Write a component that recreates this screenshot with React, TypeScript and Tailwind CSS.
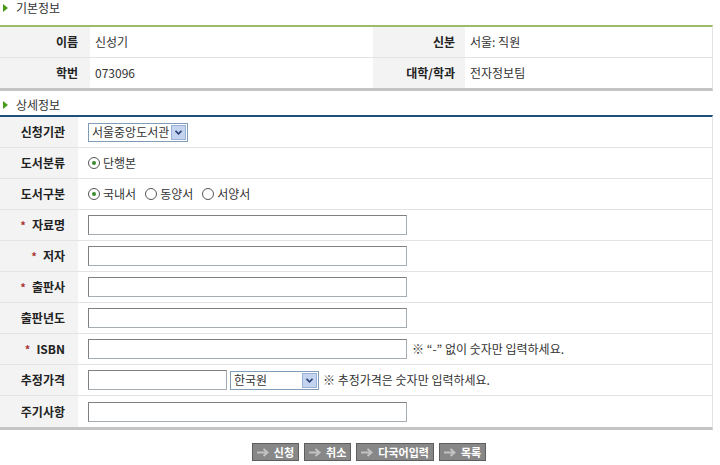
import React from "react";

const font = { fontFamily: '"Noto Sans CJK KR", "Liberation Sans", sans-serif' };

const SectionTitle = ({ text, h, pt }: { text: string; h: string; pt: string }) => (
  <div className={`flex items-start ${h} ${pt} pl-[3px] text-[12px] leading-[14px] text-[#333]`}>
    <span className="w-0 h-0 mt-[3px] border-y-[4px] border-y-transparent border-l-[5px] border-l-[#4a9a1a] mr-[8px]" />
    <span>{text}</span>
  </div>
);

const Star = () => <span className="text-[#a33] mr-[6px] text-[11px]">*</span>;

const Radio = ({ checked, label }: { checked?: boolean; label: string }) => (
  <label className="flex items-center mr-[9px]">
    <span className="w-[12px] h-[12px] rounded-full border border-[#555] bg-white flex items-center justify-center mr-[3px]">
      {checked && <span className="w-[4px] h-[4px] rounded-full bg-[#3a8a2a]" />}
    </span>
    <span>{label}</span>
  </label>
);

const Input = ({ w }: { w: string }) => (
  <input
    type="text"
    className={`${w} h-[20px] border border-[#a5acb2] border-t-[#808080] border-l-[#808080] bg-white outline-none`}
  />
);

const SelectBox = ({ w, value }: { w: string; value: string }) => (
  <div className={`${w} h-[19px] border border-[#7f9db9] bg-white flex items-center justify-between`}>
    <span className="pl-[3px] text-[12px]">{value}</span>
    <span className="w-[15px] h-[15px] mr-[1px] bg-[#c4d4ef] border border-[#98b0d8] flex items-center justify-center">
      <svg width="7" height="5" viewBox="0 0 7 5">
        <path d="M0.5 0.8 L3.5 3.8 L6.5 0.8" fill="none" stroke="#2b3f78" strokeWidth="1.6" />
      </svg>
    </span>
  </div>
);

const DetailRow = ({
  label,
  star,
  last,
  children,
}: {
  label: string;
  star?: boolean;
  last?: boolean;
  children?: React.ReactNode;
}) => (
  <div className={`flex h-[31px] ${last ? "" : "border-b border-[#e3e3e3]"}`}>
    <div className="w-[78px] bg-[#f3f3f3] flex items-center justify-end pr-[13px] font-bold text-[#222]">
      {star && <Star />}
      {label}
    </div>
    <div className="flex-1 flex items-center pl-[10px]">{children}</div>
  </div>
);

const Button = ({ label }: { label: string }) => (
  <button className="h-[18px] px-[4px] bg-[#878787] border border-[#5e5e5e] flex items-center text-white font-bold text-[11px] leading-none">
    <svg width="13" height="9" viewBox="0 0 13 9" className="mr-[4px]">
      <path d="M0 4.5 H10 M6.5 1 L10.5 4.5 L6.5 8" fill="none" stroke="#c2c2c2" strokeWidth="2" />
    </svg>
    {label}
  </button>
);

export default function App() {
  return (
    <div className="w-[720px] h-[465px] bg-white text-[12px] text-[#333] overflow-hidden" style={font}>
      <SectionTitle text="기본정보" h="h-[25px]" pt="pt-[1px]" />
      <div className="w-[713px] border-t-2 border-t-[#9cbb6c] border-b-[3px] border-b-[#c4c4c4] border-r border-r-[#e3e3e3]">
        <div className="flex h-[31px] border-b border-[#e3e3e3]">
          <div className="w-[90px] bg-[#f3f3f3] flex items-center justify-end pr-[12px] font-bold text-[#222]">이름</div>
          <div className="w-[283px] flex items-center pl-[5px]">신성기</div>
          <div className="w-[92px] bg-[#f3f3f3] flex items-center justify-end pr-[10px] font-bold text-[#222]">신분</div>
          <div className="flex-1 flex items-center pl-[5px]">서울: 직원</div>
        </div>
        <div className="flex h-[30px]">
          <div className="w-[90px] bg-[#f3f3f3] flex items-center justify-end pr-[12px] font-bold text-[#222]">학번</div>
          <div className="w-[283px] flex items-center pl-[5px]">073096</div>
          <div className="w-[92px] bg-[#f3f3f3] flex items-center justify-end pr-[10px] font-bold text-[#222]">대학/학과</div>
          <div className="flex-1 flex items-center pl-[5px]">전자정보팀</div>
        </div>
      </div>

      <SectionTitle text="상세정보" h="h-[24px]" pt="pt-[7px]" />
      <div className="w-[713px] border-t-2 border-t-[#1d4f7c] border-b-[3px] border-b-[#c4c4c4] border-r border-r-[#e3e3e3]">
        <DetailRow label="신청기관">
          <SelectBox w="w-[100px]" value="서울중앙도서관" />
        </DetailRow>
        <DetailRow label="도서분류">
          <Radio checked label="단행본" />
        </DetailRow>
        <DetailRow label="도서구분">
          <Radio checked label="국내서" />
          <Radio label="동양서" />
          <Radio label="서양서" />
        </DetailRow>
        <DetailRow label="자료명" star>
          <Input w="w-[319px]" />
        </DetailRow>
        <DetailRow label="저자" star>
          <Input w="w-[319px]" />
        </DetailRow>
        <DetailRow label="출판사" star>
          <Input w="w-[319px]" />
        </DetailRow>
        <DetailRow label="출판년도">
          <Input w="w-[319px]" />
        </DetailRow>
        <DetailRow label="ISBN" star>
          <Input w="w-[319px]" />
          <span className="ml-[5px]">※ “-” 없이 숫자만 입력하세요.</span>
        </DetailRow>
        <DetailRow label="추정가격">
          <Input w="w-[139px]" />
          <div className="ml-[3px]">
            <SelectBox w="w-[89px]" value="한국원" />
          </div>
          <span className="ml-[4px]">※ 추정가격은 숫자만 입력하세요.</span>
        </DetailRow>
        <DetailRow label="주기사항" last>
          <Input w="w-[319px]" />
        </DetailRow>
      </div>

      <div className="flex justify-center gap-[5px] mt-[13px] pl-[18px]">
        <Button label="신청" />
        <Button label="취소" />
        <Button label="다국어입력" />
        <Button label="목록" />
      </div>
    </div>
  );
}
